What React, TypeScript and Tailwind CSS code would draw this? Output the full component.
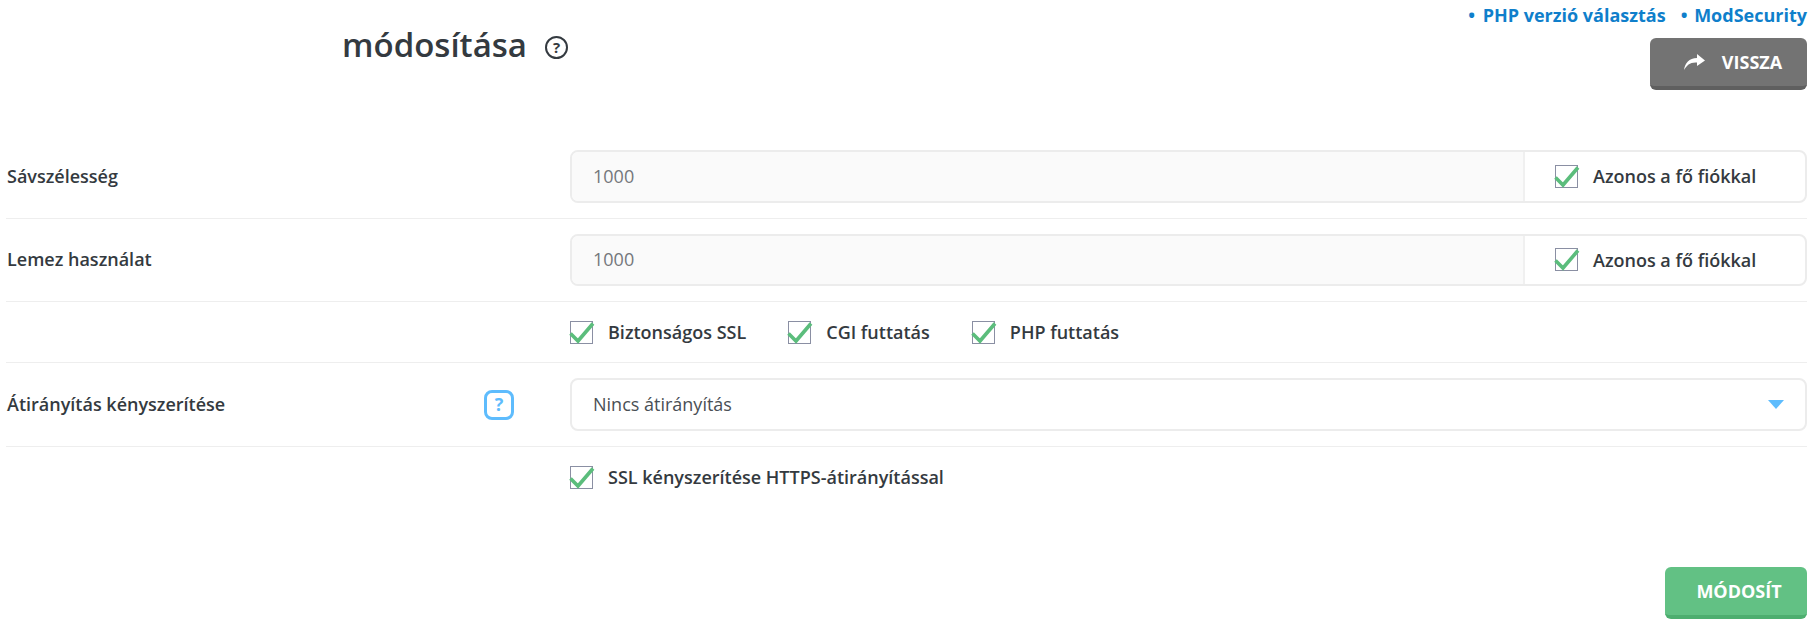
const font = { fontFamily: '"Open Sans", "Noto Sans", sans-serif' };

function CheckBox({ label }: { label: string }) {
  return (
    <label className="flex items-center">
      <span className="relative block w-[23px] h-[23px] border border-[#8a8fa3] bg-white shrink-0">
        <svg
          className="absolute left-[-2px] top-[-1px]"
          width="26"
          height="24"
          viewBox="0 0 26 24"
          fill="none"
        >
          <path
            d="M1.5 12.5 L9 20 L24 2.5"
            stroke="#5bbd7c"
            strokeWidth="3.6"
          />
        </svg>
      </span>
      <span className="ml-[15px] text-[18px] font-semibold text-[#343a40] leading-[24px]">
        {label}
      </span>
    </label>
  );
}

function LimitRow({ label }: { label: string }) {
  return (
    <div className="flex items-center pt-[15px] pb-[15px] border-b border-[#eeeeee]">
      <div className="w-[564px] shrink-0 pl-[1px] text-[18px] font-semibold text-[#343a40]">
        {label}
      </div>
      <div className="flex flex-1 h-[52.5px] border-2 border-[#ececec] rounded-lg overflow-hidden">
        <div className="flex-1 flex items-center pl-[21px] bg-[#fafafa] text-[18px] text-[#74777c]">
          1000
        </div>
        <div className="w-[282px] flex items-center pl-[30px] border-l-2 border-[#f0f0f0]">
          <CheckBox label="Azonos a fő fiókkal" />
        </div>
      </div>
    </div>
  );
}

export default function App() {
  return (
    <div className="w-[1810px] h-[628px] bg-white overflow-hidden" style={font}>
      <div className="flex justify-between h-[135px] pr-[3px]">
        <div className="flex items-start pl-[342px] pt-[22px]">
          <h1 className="text-[33px] leading-[46px] font-semibold text-[#343a40]">
            módosítása
          </h1>
          <span className="ml-[18px] mt-[14px] flex items-center justify-center w-[23px] h-[23px] rounded-full border-[2.5px] border-[#343a40] text-[15px] leading-none font-bold text-[#343a40]">
            ?
          </span>
        </div>
        <div className="flex flex-col items-end">
          <div className="flex gap-[15px] mt-[3px] text-[18px] leading-[24px] font-bold text-[#0f7fcb]">
            <a>
              <span className="mr-[3px]">•</span> PHP verzió választás
            </a>
            <a>
              <span className="mr-[2px]">•</span> ModSecurity
            </a>
          </div>
          <button className="mt-[11px] w-[157px] h-[52px] flex items-center justify-center gap-[17px] pl-[9px] rounded-md bg-[#737373] border-b-[4px] border-[#5f5f5f] text-white text-[18px] font-bold">
            <svg width="21" height="16" viewBox="0 0 21 16" fill="#ffffff">
              <path d="M13 0 L21 6.5 L13 12 V8.5 C6 8 3 11 0 16 C1 9 5 4 13 4 Z" />
            </svg>
            VISSZA
          </button>
        </div>
      </div>

      <div className="pl-[6px] pr-[3px]">
        <LimitRow label="Sávszélesség" />
        <LimitRow label="Lemez használat" />

        <div className="flex items-center h-[61px] pl-[564px] gap-[42px] border-b border-[#eeeeee]">
          <CheckBox label="Biztonságos SSL" />
          <CheckBox label="CGI futtatás" />
          <CheckBox label="PHP futtatás" />
        </div>

        <div className="flex items-center pt-[15px] pb-[15px] border-b border-[#eeeeee]">
          <div className="w-[564px] shrink-0 flex items-center pl-[1px] text-[18px] font-semibold text-[#343a40]">
            <span className="w-[477px]">Átirányítás kényszerítése</span>
            <span className="flex items-center justify-center w-[30px] h-[30px] rounded-lg border-[3px] border-[#5ebcfd] text-[#5ebcfd] text-[18px] font-bold">
              ?
            </span>
          </div>
          <div className="flex flex-1 h-[53px] items-center justify-between pl-[21px] pr-[21px] border-2 border-[#ececec] rounded-lg text-[18px] text-[#4a4f55]">
            Nincs átirányítás
            <span className="w-0 h-0 border-l-[8px] border-r-[8px] border-t-[9px] border-l-transparent border-r-transparent border-t-[#5ebcfd]" />
          </div>
        </div>

        <div className="pl-[564px] pt-[18px]">
          <CheckBox label="SSL kényszerítése HTTPS-átirányítással" />
        </div>

        <div className="flex justify-end mt-[78px]">
          <button className="w-[142px] h-[52px] pl-[6px] rounded-md bg-[#62c184] border-b-[4px] border-[#4dae6f] text-white text-[18px] font-bold">
            MÓDOSÍT
          </button>
        </div>
      </div>
    </div>
  );
}
